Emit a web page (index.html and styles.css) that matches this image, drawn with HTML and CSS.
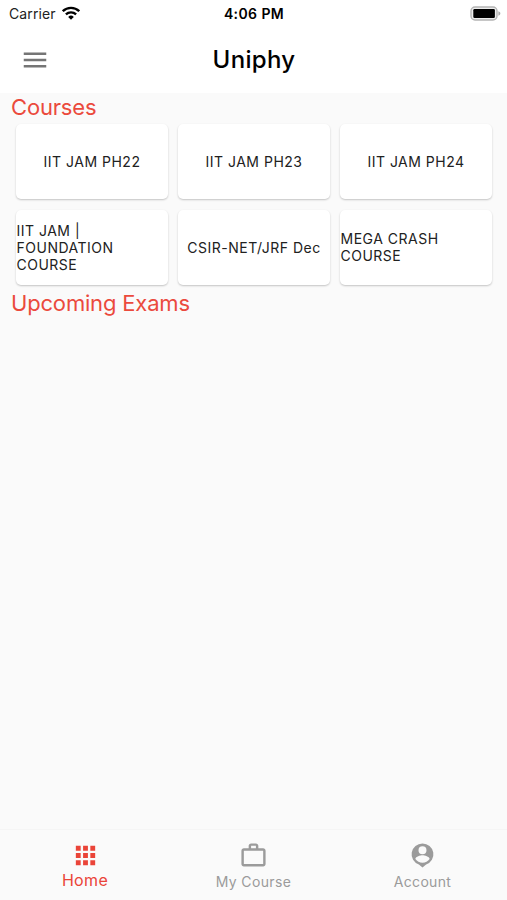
FILE: index.html
```html
<!DOCTYPE html>
<html lang="en">
<head>
<meta charset="utf-8">
<title>Uniphy</title>
<link rel="stylesheet" href="styles.css">
</head>
<body>
<div class="app">
  <header class="top">
    <div class="status">
      <div class="carrier"><span>Carrier</span>
        <svg class="wifi" viewBox="0 0 18 14"><g fill="none" stroke="#000" stroke-width="2.3"><path d="M.8 5.2a11.6 11.6 0 0 1 16.4 0"/><path d="M3.9 8.4a7.2 7.2 0 0 1 10.2 0"/></g><path d="M9 13.8 6.2 10.9a4 4 0 0 1 5.6 0z"/></svg>
      </div>
      <span class="time">4:06 PM</span>
      <svg class="battery" viewBox="0 0 31 15"><rect x="1" y="1" width="26" height="13" rx="4" fill="#ededed" stroke="#b4b4b4" stroke-width="1.4"/><rect x="3.3" y="3.1" width="21.6" height="8.8" rx="1.2"/><path d="M28.4 5.3c2.6 1 2.6 3.4 0 4.4z" fill="#aaa"/></svg>
    </div>
    <div class="bar">
      <svg class="menu" viewBox="0 0 24 24"><path d="M3 18h18v-2H3v2zm0-5h18v-2H3v2zm0-7v2h18V6H3z"/></svg>
      <h1>Uniphy</h1>
    </div>
  </header>
  <main>
    <h2 class="courses-title">Courses</h2>
    <div class="grid">
      <div class="card"><span>IIT JAM PH22</span></div>
      <div class="card"><span>IIT JAM PH23</span></div>
      <div class="card"><span>IIT JAM PH24</span></div>
      <div class="card"><span>IIT JAM |<br>FOUNDATION<br>COURSE</span></div>
      <div class="card"><span>CSIR-NET/JRF Dec</span></div>
      <div class="card"><span>MEGA CRASH<br>COURSE</span></div>
    </div>
    <h2 class="exams-title">Upcoming Exams</h2>
  </main>
  <nav>
    <div class="tab active"><svg viewBox="0 0 24 24"><path d="M4 8h4V4H4v4zm6 12h4v-4h-4v4zm-6 0h4v-4H4v4zm0-6h4v-4H4v4zm6 0h4v-4h-4v4zm6-10v4h4V4h-4zm-6 4h4V4h-4v4zm6 6h4v-4h-4v4zm0 6h4v-4h-4v4z"/></svg><span>Home</span></div>
    <div class="tab"><svg viewBox="0 0 24 24"><path fill-rule="evenodd" d="M14 6V4h-4v2h4zM4 8v11h16V8H4zm16-2c1.11 0 2 .89 2 2v11c0 1.11-.89 2-2 2H4c-1.11 0-2-.89-2-2V8c0-1.11.89-2 2-2h4V4c0-1.11.89-2 2-2h4c1.11 0 2 .89 2 2v2h4z"/></svg><span>My Course</span></div>
    <div class="tab"><svg viewBox="0 0 24 24"><path fill-rule="evenodd" d="M12 2a9 9 0 0 0-3 17.5L12 22l3-2.500A9 9 0 0 0 12 2zm0 2.400a3.300 3.300 0 1 1 0 6.600 3.300 3.300 0 0 1 0-6.600zM12 18c-2.400 0-4.500-1.200-5.900-3.200.3-2 4-3 5.900-3s5.600 1 5.900 3C16.500 16.800 14.400 18 12 18z"/></svg><span>Account</span></div>
  </nav>
</div>
</body>
</html>
```
FILE: styles.css
```css
* { box-sizing: border-box; }
body { margin: 0; font-family: Inter, "Liberation Sans", sans-serif; background: #fafafa; color: #000; }
.app { height: 900px; display: flex; flex-direction: column; }
.top { height: 93px; background: #fff; }
.status { height: 27px; display: grid; grid-template-columns: 1fr auto 1fr; align-items: center; padding: 0 6px 0 9px; }
.carrier { display: flex; align-items: center; gap: 6px; font-size: 14px; letter-spacing: .1px; color: #222; }
.wifi { width: 18px; height: 14px; margin-top: -2px; }
.time { font-size: 14px; font-weight: 600; letter-spacing: .4px; margin-right: 2px; }
.battery { width: 31px; height: 15px; justify-self: end; }
.bar { height: 66px; display: grid; grid-template-columns: 70px 1fr 70px; align-items: center; }
.menu { width: 30px; height: 30px; margin-left: 20px; fill: #757575; }
h1 { margin: -1px 0 0 1px; font-size: 24px; font-weight: 500; text-align: center; letter-spacing: .3px; }
main { flex: 1; }
h2 { margin: 0; padding-left: 11px; font-size: 22px; line-height: 28px; font-weight: 400; color: #eb4a3d; letter-spacing: -.18px; }
.grid { display: grid; grid-template-columns: repeat(3, 152px); grid-auto-rows: 75px; gap: 11px 10px; padding: 3px 0 0 16px; }
.card { display: flex; align-items: center; justify-content: center; background: #fff; border-radius: 5px; box-shadow: 0 1px 2px #00000038; font-size: 14px; line-height: 17px; letter-spacing: .5px; color: #212121; }
.card span { white-space: nowrap; }
.card:nth-child(4) span, .card:nth-child(6) span { width: 100%; padding-left: .5px; }
.card:nth-child(4) span, .card:nth-child(6) span { margin-top: -1px; }
.exams-title { margin-top: 4px; }
nav { height: 71px; display: grid; grid-template-columns: repeat(3, 1fr); border-top: 1px solid #f5f5f5; }
.tab { display: flex; flex-direction: column; align-items: center; padding-top: 11px; color: #9b9b9b; font-size: 14px; line-height: 23px; letter-spacing: .35px; }
.tab svg { width: 29px; height: 29px; fill: currentColor; }
.active { color: #ea4438; font-size: 16px; line-height: 20px; padding-left: 1px; }
```
